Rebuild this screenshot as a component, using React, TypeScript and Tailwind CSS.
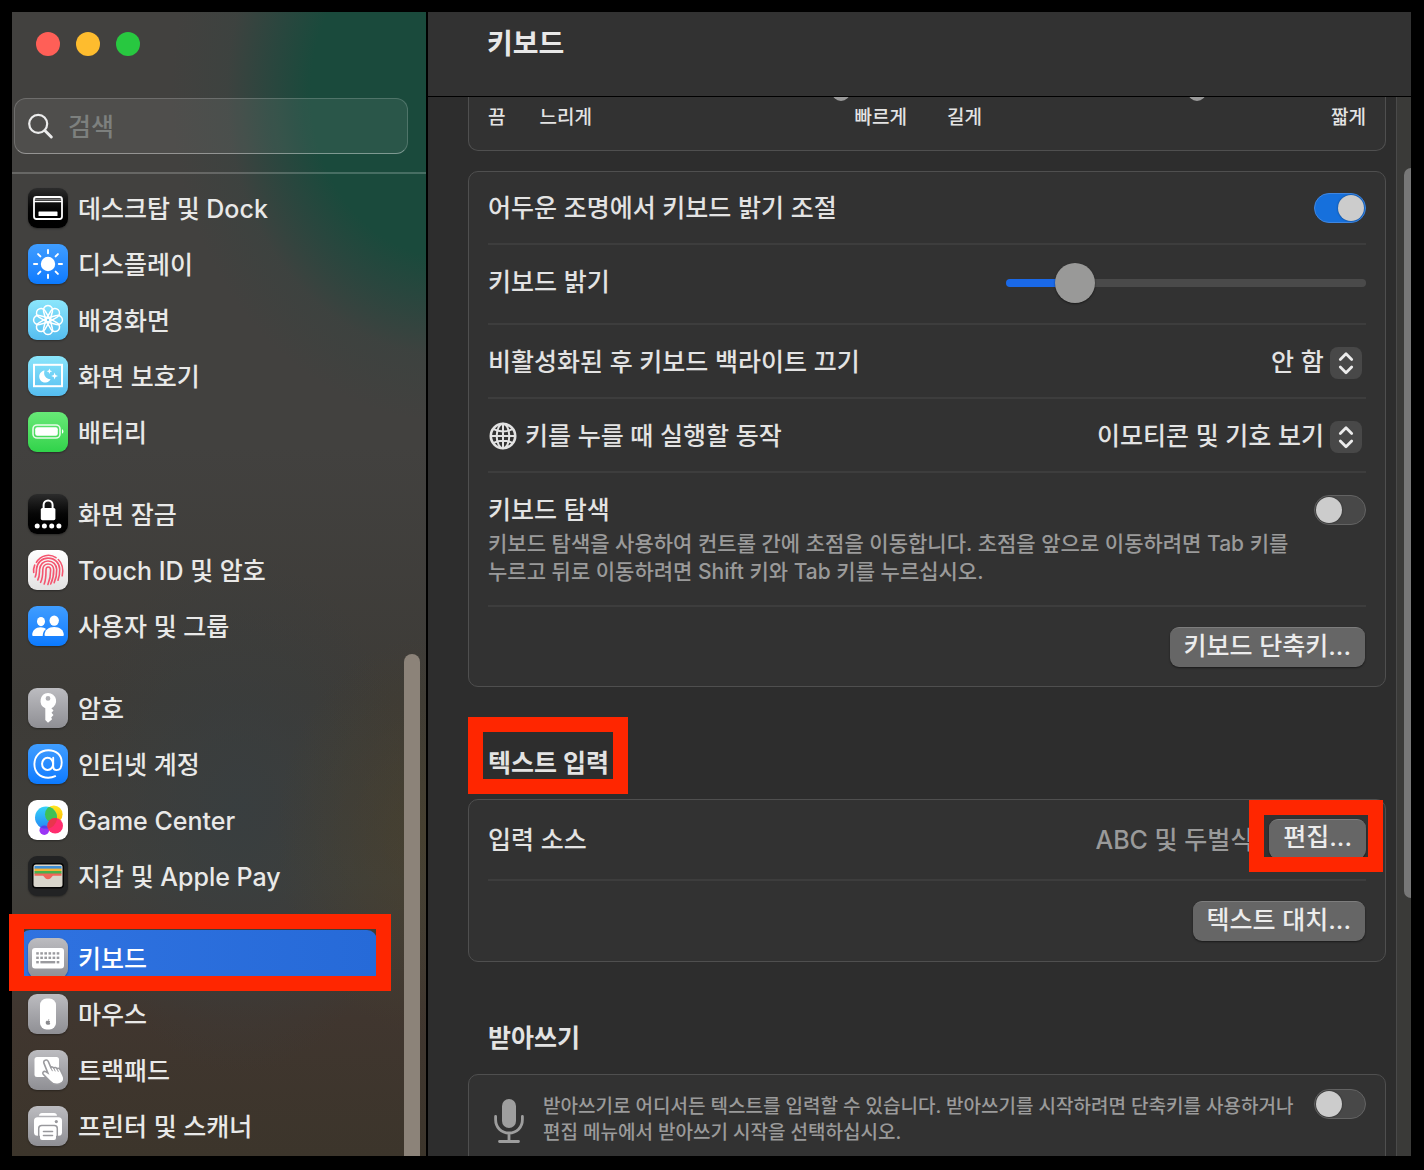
import type { ReactNode } from "react";

/* ---------- sidebar icons ---------- */

function Tile({ className, children }: { className: string; children: ReactNode }) {
  return (
    <span className={`block size-10 shrink-0 overflow-hidden rounded-[9px] shadow-[0_1px_2px_rgba(0,0,0,0.35)] ${className}`}>
      {children}
    </span>
  );
}

const BLACK = "bg-linear-to-b from-[#2c2c2c] via-[#060606] to-black";
const BLUE = "bg-linear-to-b from-[#3f9dff] to-[#0a7aff]";
const SKY = "bg-linear-to-b from-[#8be6fb] to-[#55bdf0]";
const GRAY = "bg-linear-to-b from-[#bcbcc0] to-[#8f8f94]";

const svg = { viewBox: "0 0 40 40", className: "block size-10", fill: "none", "aria-hidden": true } as const;

function DockIcon() {
  return (
    <Tile className={BLACK}>
      <svg {...svg}>
        <rect x="6" y="9" width="28" height="22" rx="2.5" stroke="#fff" strokeWidth="1.8" />
        <path d="M6 13.6h28" stroke="#fff" strokeWidth="1.2" />
        <path d="M7 11.4h26" stroke="#777" strokeWidth="2" />
        <rect x="10.5" y="23.5" width="19" height="4.5" rx="0.6" fill="#fff" />
      </svg>
    </Tile>
  );
}

function DisplayIcon() {
  return (
    <Tile className={BLUE}>
      <svg {...svg}>
        <circle cx="20" cy="20" r="7.2" fill="#fff" />
        <g stroke="#fff" strokeWidth="2" strokeLinecap="round">
          {[0, 45, 90, 135, 180, 225, 270, 315].map((a) => (
            <path key={a} d="M20 6v3.2" transform={`rotate(${a} 20 20)`} />
          ))}
        </g>
      </svg>
    </Tile>
  );
}

function WallpaperIcon() {
  return (
    <Tile className={SKY}>
      <svg {...svg}>
        <g stroke="#fff" strokeWidth="1.5" strokeLinejoin="round">
          {[0, 45, 90, 135, 180, 225, 270, 315].map((a) => (
            <path key={a} d="M18.2 21.5L15.6 11.5A4.6 4.6 0 1 1 24.4 11.5L21.8 21.5" transform={`rotate(${a} 20 20)`} />
          ))}
        </g>
      </svg>
    </Tile>
  );
}

function ScreenSaverIcon() {
  return (
    <Tile className={SKY}>
      <svg {...svg}>
        <rect x="6" y="8.8" width="28" height="21.4" stroke="#fff" strokeWidth="2" />
        <path d="M16.6 14.6a6 6 0 1 0 6 8.6 6.2 6.2 0 0 1-6-8.6z" fill="#fff" />
        <path d="M21.4 12.4l.8 2 2 .8-2 .8-.8 2-.8-2-2-.8 2-.8zM26.6 16.6l.9 2.5 2.5.9-2.5.9-.9 2.5-.9-2.5-2.5-.9 2.5-.9z" fill="#fff" />
      </svg>
    </Tile>
  );
}

function BatteryIcon() {
  return (
    <Tile className="bg-linear-to-b from-[#67e977] to-[#2fd34a]">
      <svg {...svg}>
        <rect x="5" y="13" width="27" height="13" rx="4" stroke="#fff" strokeOpacity="0.85" strokeWidth="1.6" />
        <rect x="7.2" y="15.2" width="22.6" height="8.6" rx="2" fill="#fff" />
        <path d="M34 17.3c1.9.7 1.9 3.7 0 4.4z" fill="#fff" />
      </svg>
    </Tile>
  );
}

function LockIcon() {
  return (
    <Tile className={BLACK}>
      <svg {...svg}>
        <rect x="12.8" y="14" width="14.6" height="12.2" rx="1.6" fill="#fff" />
        <path d="M15.6 14.5v-3.4a4.5 4.7 0 0 1 9 0v3.4" stroke="#fff" strokeWidth="2" />
        {[9.2, 16.4, 23.7, 30.9].map((x) => (
          <circle key={x} cx={x} cy="32" r="2.5" fill="#fff" />
        ))}
      </svg>
    </Tile>
  );
}

function TouchIdIcon() {
  return (
    <Tile className="bg-linear-to-b from-white to-[#e2e2e2]">
      <svg {...svg} stroke="#f4556f" strokeWidth="1.6" strokeLinecap="round">
        <path d="M8.4 12.400C12.500 5.200 21.500 3.300 28 7.700" />
        <path d="M30.300 9.500c4.300 4.200 5.200 10 3.900 16.300" />
        <path d="M5.700 22.500c-.3-2.600 0-5 1-7.400" />
        <path d="M7.200 27c1.200-2.500 1.100-5 1.300-7.700C9 12.600 14 8.100 20 8.100c7 0 11.500 5 11.700 11.100.1 4-.4 7.500-1.700 11" />
        <path d="M9.800 30c1.900-3.500 1.600-6.800 1.800-10.500.3-5 3.900-8.500 8.400-8.500 5 0 8.500 3.500 8.700 8.500.1 4.500-.6 9-2.500 13.200" />
        <path d="M12.600 32.300c2.200-4 2.200-8.300 2.200-12.600.1-3.200 2.200-5.700 5.200-5.700 3.400 0 5.600 2.500 5.700 5.800.1 5-.8 9.600-3 14.200" />
        <path d="M16.200 34c1.800-4.500 1.800-9.300 1.800-14 0-1.800.8-3 2.100-3 1.600 0 2.500 1.200 2.500 3 .1 5-.7 9.700-2.700 14.500" />
      </svg>
    </Tile>
  );
}

function UsersIcon() {
  return (
    <Tile className={BLUE}>
      <svg {...svg} fill="#fff">
        <ellipse cx="13" cy="15.6" rx="4" ry="4.6" />
        <path d="M4.2 29.2c0-5 3.6-8 8.4-8 2.4 0 4.1.7 5.4 1.8-2 1.6-3.2 3.7-3.3 6.9H5.4c-.8 0-1.2-.2-1.2-.7z" />
        <ellipse cx="26.2" cy="14.6" rx="4.7" ry="5.2" />
        <path d="M16.5 29c.1-5 4-8 9.7-8s9.5 3 9.6 8c0 .6-.3.9-1.1.9H17.6c-.8 0-1.1-.3-1.1-.9z" />
      </svg>
    </Tile>
  );
}

function KeyIcon() {
  return (
    <Tile className={GRAY}>
      <svg {...svg}>
        <path
          fillRule="evenodd"
          fill="#fff"
          d="M20 5a8 8 0 0 1 3.4 15.3l2.1 2.2-2 2.3 2 2.2-2.3 2.5.9 1.8-4.1 3.5-2.7-2.8V20.3A8 8 0 0 1 20 5zm0 3a2.4 2.4 0 1 0 0 4.8A2.4 2.4 0 0 0 20 8z"
        />
      </svg>
    </Tile>
  );
}

function AtIcon() {
  return (
    <Tile className={BLUE}>
      <svg {...svg} stroke="#fff" strokeLinecap="round">
        <path strokeWidth="1.9" d="M27.2 32.2c-2 1-4.3 1.5-7 1.5C11.8 33.7 6.4 28.4 6.4 20.3 6.4 12 12.3 6.2 20.4 6.2c7.9 0 13.3 4.9 13.3 12.2 0 4.7-2 7.7-5.1 7.7-2.2 0-3.4-1.2-3.4-3.3v-9" />
        <ellipse strokeWidth="2" cx="19.6" cy="19.9" rx="5.5" ry="6.2" />
      </svg>
    </Tile>
  );
}

function GameCenterIcon() {
  return (
    <Tile className="bg-white">
      <svg {...svg}>
        <defs>
          <linearGradient id="gcBlue" x1="0" y1="0" x2="0" y2="1">
            <stop offset="0" stopColor="#35d3f8" />
            <stop offset="1" stopColor="#2588f5" />
          </linearGradient>
          <linearGradient id="gcYellow" x1="0" y1="0" x2="0" y2="1">
            <stop offset="0" stopColor="#ffe620" />
            <stop offset="1" stopColor="#ffb400" />
          </linearGradient>
          <clipPath id="gcClip">
            <circle cx="18" cy="17.6" r="11" />
          </clipPath>
        </defs>
        <circle cx="25.8" cy="14.3" r="8.8" fill="url(#gcYellow)" />
        <circle cx="16.3" cy="30.2" r="4.8" fill="#9a35f5" />
        <circle cx="18" cy="17.6" r="11" fill="url(#gcBlue)" />
        <g clipPath="url(#gcClip)">
          <circle cx="25.8" cy="14.3" r="8.8" fill="#3fc155" />
          <circle cx="16.3" cy="30.2" r="4.8" fill="#5a3be8" />
        </g>
        <circle cx="27.2" cy="25.7" r="7.8" fill="#ff2d6e" />
        <g clipPath="url(#gcClip)">
          <circle cx="27.2" cy="25.7" r="7.8" fill="#e8354c" />
        </g>
      </svg>
    </Tile>
  );
}

function WalletIcon() {
  return (
    <Tile className="bg-[#222324]">
      <svg {...svg}>
        <rect x="4" y="7" width="32" height="25.5" rx="4" fill="#050505" />
        <rect x="5.5" y="8.5" width="29" height="22.5" rx="2.5" fill="#d9d6cc" />
        <rect x="6.5" y="10" width="27" height="3" fill="#3f8fd6" />
        <rect x="6.5" y="12.6" width="27" height="3" fill="#f5b335" />
        <rect x="6.5" y="15" width="27" height="3" fill="#48b14c" />
        <path d="M6.5 17.4h27v2.4h-7.8c-1.2 0-1.6.7-2.2 1.5-.9 1.2-1.9 1.9-3.5 1.9s-2.6-.7-3.5-1.9c-.6-.8-1-1.5-2.2-1.5H6.5z" fill="#f0655a" />
      </svg>
    </Tile>
  );
}

function KeyboardIcon() {
  const keys = [9.5, 13.6, 17.7, 21.8, 25.9, 30];
  return (
    <Tile className={GRAY}>
      <svg {...svg}>
        <rect x="4" y="10" width="32" height="20.5" rx="3" fill="#fff" />
        <g fill="#9b9b9f">
          {keys.map((x) => (
            <rect key={`a${x}`} x={x - 1.3} y="14.2" width="2.6" height="2.4" />
          ))}
          {keys.map((x) => (
            <rect key={`b${x}`} x={x - 1.3} y="18.6" width="2.6" height="2.4" />
          ))}
          <rect x="8.2" y="23" width="2.6" height="2.4" />
          <rect x="12.4" y="23" width="14.8" height="2.4" />
          <rect x="28.7" y="23" width="2.6" height="2.4" />
        </g>
      </svg>
    </Tile>
  );
}

function MouseIcon() {
  return (
    <Tile className={GRAY}>
      <svg {...svg}>
        <rect x="12" y="4.5" width="16" height="31" rx="6.5" fill="#fff" />
        <path d="M19.9 27c.8-.5 1.9-.4 2.3.3-.8.6-.7 1.7.1 2.2-.5 1.3-1.3 1.6-2.3 1.2-1.1.4-2.3-.3-2.3-2.1 0-1.5 1.2-2.2 2.2-1.6zM20 26.6c0-.9.6-1.5 1.3-1.6 0 .9-.5 1.5-1.3 1.6z" fill="#8a8a8e" />
      </svg>
    </Tile>
  );
}

function TrackpadIcon() {
  return (
    <Tile className={GRAY}>
      <svg {...svg}>
        <rect x="6.5" y="7" width="24.5" height="20" rx="2.5" fill="#fff" />
        <path
          d="M17.2 10.2c1.3-.5 2.6.1 3.1 1.3l2.5 5.9c.8-.8 2.2-.6 2.9.5 1-.8 2.5-.5 3.2.7 1.2-.6 2.6-.1 3.4 1.3l2.6 5.2c2.2 4.1.8 7.3-3.2 8.7-4 1.3-7.5.2-9.9-2.7l-6.6-6.8c-1.2-1.5.5-3.6 2.4-2.7l2.2 1.3-3.9-9.8c-.5-1.3.1-2.5 1.3-2.9z"
          fill="#fff"
          stroke="#9b9b9f"
          strokeWidth="1.6"
        />
        <path d="M22.8 17.6l1.5 3.2M25.8 18.2l1.3 2.8M29 18.9l1.2 2.5" stroke="#9b9b9f" strokeWidth="1" strokeLinecap="round" />
      </svg>
    </Tile>
  );
}

function PrinterIcon() {
  return (
    <Tile className={GRAY}>
      <svg {...svg}>
        <path d="M11 9.8C11.2 7.9 12.2 7 14 7h12c1.8 0 2.8.9 3 2.8z" fill="#fff" />
        <rect x="6" y="11.3" width="28" height="18.5" rx="3.5" fill="#fff" />
        <circle cx="28.3" cy="15.6" r="1.6" fill="#98989c" />
        <path d="M10.7 31V22.5a3 3 0 0 1 3-3h12.6a3 3 0 0 1 3 3V31" stroke="#98989c" strokeWidth="1.5" />
        <rect x="12" y="20.8" width="16" height="13.2" rx="2" fill="#fff" />
        <path d="M15.5 25.5h9M15.5 29.5h9" stroke="#98989c" strokeWidth="1.6" strokeLinecap="round" />
      </svg>
    </Tile>
  );
}

/* ---------- sidebar ---------- */

type Item = { label: string; icon: ReactNode; active?: boolean };

const GROUPS: Item[][] = [
  [
    { label: "데스크탑 및 Dock", icon: <DockIcon /> },
    { label: "디스플레이", icon: <DisplayIcon /> },
    { label: "배경화면", icon: <WallpaperIcon /> },
    { label: "화면 보호기", icon: <ScreenSaverIcon /> },
    { label: "배터리", icon: <BatteryIcon /> },
  ],
  [
    { label: "화면 잠금", icon: <LockIcon /> },
    { label: "Touch ID 및 암호", icon: <TouchIdIcon /> },
    { label: "사용자 및 그룹", icon: <UsersIcon /> },
  ],
  [
    { label: "암호", icon: <KeyIcon /> },
    { label: "인터넷 계정", icon: <AtIcon /> },
    { label: "Game Center", icon: <GameCenterIcon /> },
    { label: "지갑 및 Apple Pay", icon: <WalletIcon /> },
  ],
  [
    { label: "키보드", icon: <KeyboardIcon />, active: true },
    { label: "마우스", icon: <MouseIcon /> },
    { label: "트랙패드", icon: <TrackpadIcon /> },
    { label: "프린터 및 스캐너", icon: <PrinterIcon /> },
  ],
];

function Marker({ className }: { className: string }) {
  return <span aria-hidden className={`pointer-events-none absolute z-10 border-[15px] border-[#ff2600] ${className}`} />;
}

function Sidebar() {
  return (
    <aside className="flex w-[414px] shrink-0 flex-col bg-[radial-gradient(ellipse_280px_330px_at_106%_7%,#1a4a3c_0%,#1a4a3c_50%,rgba(34,72,62,0.75)_64%,rgba(54,68,64,0.4)_80%,rgba(66,65,63,0)_100%),radial-gradient(ellipse_150px_200px_at_100%_72%,rgba(78,66,38,0.5),rgba(78,66,38,0)),radial-gradient(ellipse_170px_260px_at_55%_70%,rgba(56,62,64,0.9),rgba(56,62,64,0)),linear-gradient(to_bottom,#42413f_0%,#42413f_38%,#3d3b37_60%,#403f3b_76%,#40362f_88%,#3c352b_100%)]">
      <div className="flex gap-4 px-6 pt-5">
        <button aria-label="닫기" className="size-6 rounded-full bg-[#ff5f57]" />
        <button aria-label="최소화" className="size-6 rounded-full bg-[#febc2e]" />
        <button aria-label="확대" className="size-6 rounded-full bg-[#28c840]" />
      </div>
      <label className="mt-[42px] mr-[18px] ml-0.5 flex h-14 items-center gap-[13px] rounded-xl border border-white/18 border-b-white/40 bg-white/7 px-3">
        <svg viewBox="0 0 28 28" className="size-7 shrink-0" fill="none" stroke="#ececec" strokeLinecap="round" aria-hidden>
          <circle cx="11.2" cy="11.8" r="9" strokeWidth="2.2" />
          <path d="M17.8 18.5l6.5 6.5" strokeWidth="3" />
        </svg>
        <input
          type="search"
          aria-label="검색"
          placeholder="검색"
          className="w-full min-w-0 bg-transparent pt-0.5 text-[25px] leading-8 text-white outline-none placeholder:text-[#7d807e]"
        />
      </label>
      <div className="mt-[18px] h-0.5 bg-white/20" />
      <div className="flex min-h-0 flex-1">
        <nav className="flex flex-1 flex-col gap-[26px] pt-1.5 pr-[27px] pl-2">
          {GROUPS.map((group, i) => (
            <ul key={i}>
              {group.map((item) => (
                <li key={item.label} className="relative">
                  <a
                    href="#"
                    className={`flex h-14 items-center gap-2.5 rounded-[10px] pl-2 text-[25px] leading-8 ${item.active ? "bg-linear-to-r from-[#2f72e0] to-[#266ad8] text-white" : "text-[#e9e9e8]"}`}
                  >
                    {item.icon}
                    <span className="pt-0.5 whitespace-nowrap">{item.label}</span>
                  </a>
                  {item.active && <Marker className="-top-4 -right-3.5 -bottom-[5px] -left-[11px]" />}
                </li>
              ))}
            </ul>
          ))}
        </nav>
        <div className="mt-[480px] mr-1.5 w-4 rounded-t-full bg-[#8c8379]" />
      </div>
    </aside>
  );
}

/* ---------- controls ---------- */

function Switch({ label, on = false }: { label: string; on?: boolean }) {
  return (
    <input
      type="checkbox"
      role="switch"
      aria-label={label}
      defaultChecked={on}
      className="flex h-[30px] w-[52px] shrink-0 appearance-none items-center rounded-full border border-[#636363] bg-[#484848] px-px before:block before:size-[26px] before:rounded-full before:bg-[#cccccc] before:shadow-[0_0_2px_rgba(0,0,0,0.5)] before:content-[''] checked:justify-end checked:border-[#3f86e0] checked:bg-[#1670dc]"
    />
  );
}

function PopUp({ label, value }: { label: string; value: string }) {
  return (
    <div className="relative mr-1 flex items-center">
      <select aria-label={label} className="appearance-none bg-transparent pr-[38px] pb-0.5 text-[25px] leading-8 text-[#e3e3e3]">
        <option>{value}</option>
      </select>
      <span className="pointer-events-none absolute right-0 size-8 rounded-lg bg-[#484848]">
        <svg viewBox="0 0 32 32" className="block size-8" fill="none" stroke="#ececec" strokeWidth="2.8" strokeLinecap="round" strokeLinejoin="round" aria-hidden>
          <path d="M10.3 12.4L16 6.7l5.7 5.7M10.3 20l5.7 5.7 5.7-5.7" />
        </svg>
      </span>
    </div>
  );
}

function PushButton({ children }: { children: ReactNode }) {
  return (
    <button className="block h-10 rounded-[9px] border-t border-[#7d7d7d] bg-[#666666] px-3.5 pb-1 text-[25px] leading-8 whitespace-nowrap text-[#ececec] shadow-[0_1px_2px_rgba(0,0,0,0.5)]">
      {children}
    </button>
  );
}

const CARD = "rounded-[10px] border border-[#4f4f4f] bg-[#323232] px-[19px]";
const ROW = "flex items-center justify-between border-b-2 border-[#3d3d3d]";

function GlobeIcon() {
  return (
    <svg viewBox="0 0 28 28" className="size-7 shrink-0" fill="none" stroke="#e3e3e3" strokeWidth="2" aria-hidden>
      <circle cx="14" cy="14" r="12.2" strokeWidth="2.6" />
      <ellipse cx="14" cy="14" rx="6.3" ry="12.2" />
      <path d="M14 2v24M2 14h24M4.6 7.2c5.6 2.9 13.2 2.9 18.8 0M4.6 20.8c5.6-2.9 13.2-2.9 18.8 0" />
    </svg>
  );
}

function MicIcon() {
  return (
    <svg viewBox="0 0 32 44" className="h-11 w-8 shrink-0" fill="none" stroke="#9e9e9e" strokeWidth="2.8" strokeLinecap="round" aria-hidden>
      <rect x="9" y="0" width="14" height="29" rx="7" fill="#9e9e9e" stroke="none" />
      <path d="M2.6 17.5v3c0 8 5.6 13.5 13.4 13.5s13.4-5.5 13.4-13.5v-3M16 34v8M6.5 42.5h19" />
    </svg>
  );
}

const KNOB =
  "-mt-3.5 block h-[18px] w-full appearance-none bg-transparent [&::-webkit-slider-runnable-track]:h-1 [&::-webkit-slider-runnable-track]:rounded-full [&::-webkit-slider-runnable-track]:bg-[#4a4a4a] [&::-webkit-slider-thumb]:-mt-[7px] [&::-webkit-slider-thumb]:size-[18px] [&::-webkit-slider-thumb]:appearance-none [&::-webkit-slider-thumb]:rounded-full [&::-webkit-slider-thumb]:bg-[#999999]";

/* ---------- main pane ---------- */

function Content() {
  return (
    <div className="min-w-0 flex-1 overflow-hidden pr-2.5 pl-10">
      <section className={`${CARD} flex gap-10 rounded-t-none border-t-0 pb-[18px] text-[19px] leading-7 text-[#e3e3e3]`}>
        <div className="flex-1">
          <input type="range" aria-label="키 반복 속도" min={0} max={1000} defaultValue={858} className={KNOB} />
          <div className="mt-[3px] flex">
            <span>끔</span>
            <span className="ml-[34px] flex-1">느리게</span>
            <span>빠르게</span>
          </div>
        </div>
        <div className="flex-1">
          <input type="range" aria-label="반복 지연 시간" min={0} max={1000} defaultValue={601} className={KNOB} />
          <div className="mt-[3px] flex justify-between">
            <span>길게</span>
            <span>짧게</span>
          </div>
        </div>
      </section>

      <section className={`${CARD} mt-5 text-[25px] leading-8 text-[#e3e3e3]`}>
        <div className={`${ROW} h-[73px]`}>
          <span>어두운 조명에서 키보드 밝기 조절</span>
          <Switch label="어두운 조명에서 키보드 밝기 조절" on />
        </div>
        <div className={`${ROW} h-20 pb-0.5`}>
          <label htmlFor="brightness" className="pb-0.5">키보드 밝기</label>
          <input
            id="brightness"
            type="range"
            min={0}
            max={1000}
            defaultValue={153}
            className="h-10 w-[360px] appearance-none bg-transparent [&::-webkit-slider-runnable-track]:h-2 [&::-webkit-slider-runnable-track]:rounded-full [&::-webkit-slider-runnable-track]:bg-[linear-gradient(to_right,#1a69e8_19%,#4a4a4a_19%)] [&::-webkit-slider-thumb]:-mt-4 [&::-webkit-slider-thumb]:size-10 [&::-webkit-slider-thumb]:appearance-none [&::-webkit-slider-thumb]:rounded-full [&::-webkit-slider-thumb]:bg-[#999998] [&::-webkit-slider-thumb]:shadow-[0_1px_2px_rgba(0,0,0,0.5)]"
          />
        </div>
        <div className={`${ROW} h-[74px] pt-1`}>
          <span className="pb-0.5">비활성화된 후 키보드 백라이트 끄기</span>
          <PopUp label="비활성화된 후 키보드 백라이트 끄기" value="안 함" />
        </div>
        <div className={`${ROW} h-[74px] pt-1`}>
          <span className="flex items-center gap-2 pb-0.5 pl-px">
            <GlobeIcon />
            <span>키를 누를 때 실행할 동작</span>
          </span>
          <PopUp label="키를 누를 때 실행할 동작" value="이모티콘 및 기호 보기" />
        </div>
        <div className="flex items-start justify-between border-b-2 border-[#3d3d3d] pt-[21px] pb-[19px]">
          <div>
            <div>키보드 탐색</div>
            <p className="mt-1 text-[21px] leading-7 text-[#9a9a9a]">
              키보드 탐색을 사용하여 컨트롤 간에 초점을 이동합니다. 초점을 앞으로 이동하려면 Tab 키를
              <br />
              누르고 뒤로 이동하려면 Shift 키와 Tab 키를 누르십시오.
            </p>
          </div>
          <div className="-ml-20 pt-px">
            <Switch label="키보드 탐색" />
          </div>
        </div>
        <div className="flex justify-end pt-5 pr-px pb-[19px]">
          <PushButton>키보드 단축키...</PushButton>
        </div>
      </section>

      <div className="mt-[30px] flex">
        <h2 className="relative pt-[30px] pr-[19px] pb-[15px] pl-5 text-[25px] leading-8 font-bold text-[#e3e3e3]">
          텍스트 입력
          <Marker className="inset-0" />
        </h2>
      </div>

      <section className={`${CARD} mt-[5px] text-[25px] leading-8 text-[#e3e3e3]`}>
        <div className={`${ROW} h-[81px] pb-0.5`}>
          <span className="pt-0.5">입력 소스</span>
          <div className="flex items-center gap-4">
            <span className="pt-0.5 whitespace-nowrap text-[#9a9a9a]">ABC 및 두벌식</span>
            <div className="relative">
              <PushButton>편집...</PushButton>
              <Marker className="-top-[19px] -right-[17px] -bottom-[13px] -left-5" />
            </div>
          </div>
        </div>
        <div className="flex justify-end py-5 pr-px">
          <PushButton>텍스트 대치...</PushButton>
        </div>
      </section>

      <h2 className="mt-[60px] pl-5 text-[25px] leading-8 font-bold text-[#e3e3e3]">받아쓰기</h2>

      <section className={`${CARD} mt-5 flex items-start pt-[14px] pb-10`}>
        <div className="pt-2.5 pl-[5px]">
          <MicIcon />
        </div>
        <p className="ml-[18px] flex-1 pt-[5px] text-[19px] leading-[26px] text-[#9a9a9a]">
          받아쓰기로 어디서든 텍스트를 입력할 수 있습니다. 받아쓰기를 시작하려면 단축키를 사용하거나
          <br />
          편집 메뉴에서 받아쓰기 시작을 선택하십시오.
        </p>
        <Switch label="받아쓰기" />
      </section>
    </div>
  );
}

export default function App() {
  return (
    <div className="flex h-screen gap-0.5 overflow-hidden bg-black pt-3 pr-[13px] pb-3.5 pl-3 font-['Inter','Noto_Sans_CJK_KR',sans-serif] font-medium">
      <Sidebar />
      <main className="flex min-w-0 flex-1 flex-col bg-[#2d2d2d]">
        <header className="h-[85px] shrink-0 border-b border-black bg-[#323232] px-[59px] pt-3.5">
          <h1 className="text-[28px] leading-9 font-bold text-[#e8e8e8]">키보드</h1>
        </header>
        <div className="flex min-h-0 flex-1">
          <Content />
          <div className="w-[15px] shrink-0 overflow-hidden border-l border-[#4a4a4a] bg-[#3a3a38] pt-[71px]">
            <div className="ml-[7px] h-[730px] rounded-l-lg bg-[#777777]" />
          </div>
        </div>
      </main>
    </div>
  );
}
